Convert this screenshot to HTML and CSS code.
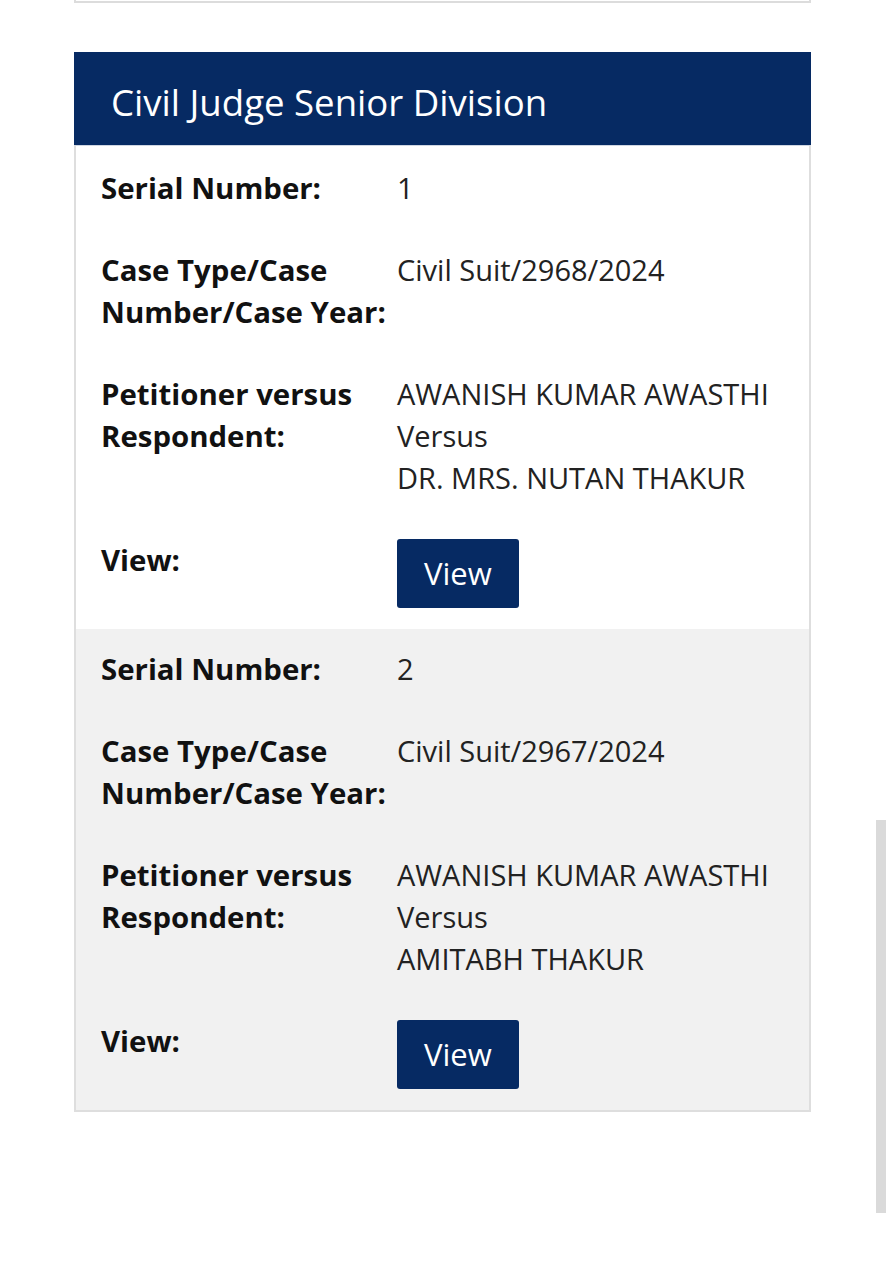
FILE: index.html
```html
<!DOCTYPE html>
<html lang="en">
<head>
    <meta charset="UTF-8">
    <meta name="viewport" content="width=device-width, initial-scale=1.0">
    <title>Cause List</title>
    <link rel="stylesheet" href="styles.css">
</head>
<body>

    <div class="wrap">
        <div class="prev-card"></div>

        <div class="court">
            <h2 class="court-title">Civil Judge Senior Division</h2>
            <div class="court-body">

                <div class="case">
                    <div class="field">
                        <div class="label">Serial Number:</div>
                        <div class="value">1</div>
                    </div>
                    <div class="field">
                        <div class="label">Case Type/Case Number/Case Year:</div>
                        <div class="value">Civil Suit/2968/2024</div>
                    </div>
                    <div class="field">
                        <div class="label">Petitioner versus Respondent:</div>
                        <div class="value">AWANISH KUMAR AWASTHI<br>Versus<br>DR. MRS. NUTAN THAKUR</div>
                    </div>
                    <div class="field">
                        <div class="label">View:</div>
                        <div class="value"><button class="btn-view">View</button></div>
                    </div>
                </div>

                <div class="case alt">
                    <div class="field">
                        <div class="label">Serial Number:</div>
                        <div class="value">2</div>
                    </div>
                    <div class="field">
                        <div class="label">Case Type/Case Number/Case Year:</div>
                        <div class="value">Civil Suit/2967/2024</div>
                    </div>
                    <div class="field">
                        <div class="label">Petitioner versus Respondent:</div>
                        <div class="value">AWANISH KUMAR AWASTHI<br>Versus<br>AMITABH THAKUR</div>
                    </div>
                    <div class="field">
                        <div class="label">View:</div>
                        <div class="value"><button class="btn-view">View</button></div>
                    </div>
                </div>

            </div>
        </div>
    </div>

    <div class="scrollbar"></div>

</body>
</html>
```

FILE: styles.css
```css
body {
    font-family: "Open Sans", Arial, sans-serif;
    margin: 0;
    background: #fff;
    color: #111;
}
.wrap {
    width: 737px;
    margin-left: 74px;
}
.prev-card {
    height: 1px;
    border: 2px solid #dcdcdc;
    border-top: none;
}
.court {
    margin-top: 49px;
}
.court-title {
    margin: 0;
    background-color: #062a63;
    color: #fff;
    font-size: 36.6px;
    font-weight: 400;
    height: 93px;
    line-height: 100px;
    padding-left: 37px;
    box-sizing: border-box;
}
.court-body {
    border: 2px solid #dedede;
    border-top: 1px solid #cfd6e2;
}
.case {
    padding: 21px 25px 21px 25px;
    display: flex;
    flex-direction: column;
    gap: 40px;
}
.case.alt {
    background-color: #f1f1f1;
    padding-top: 19px;
}
.field {
    display: grid;
    grid-template-columns: 296px 1fr;
    align-items: start;
    font-size: 29px;
    line-height: 42px;
}
.label {
    font-weight: 700;
    font-size: 29.4px;
    color: #111;
    padding-right: 6px;
}
.value {
    color: #222;
}
.btn-view {
    font-family: "Open Sans", Arial, sans-serif;
    font-size: 31px;
    height: 69px;
    line-height: 69px;
    padding: 0 27px;
    border: none;
    border-radius: 3px;
    background-color: #062a63;
    color: #fff;
    cursor: pointer;
}
.scrollbar {
    position: fixed;
    right: 0;
    top: 820px;
    width: 10px;
    height: 393px;
    background: #dadada;
}
```
